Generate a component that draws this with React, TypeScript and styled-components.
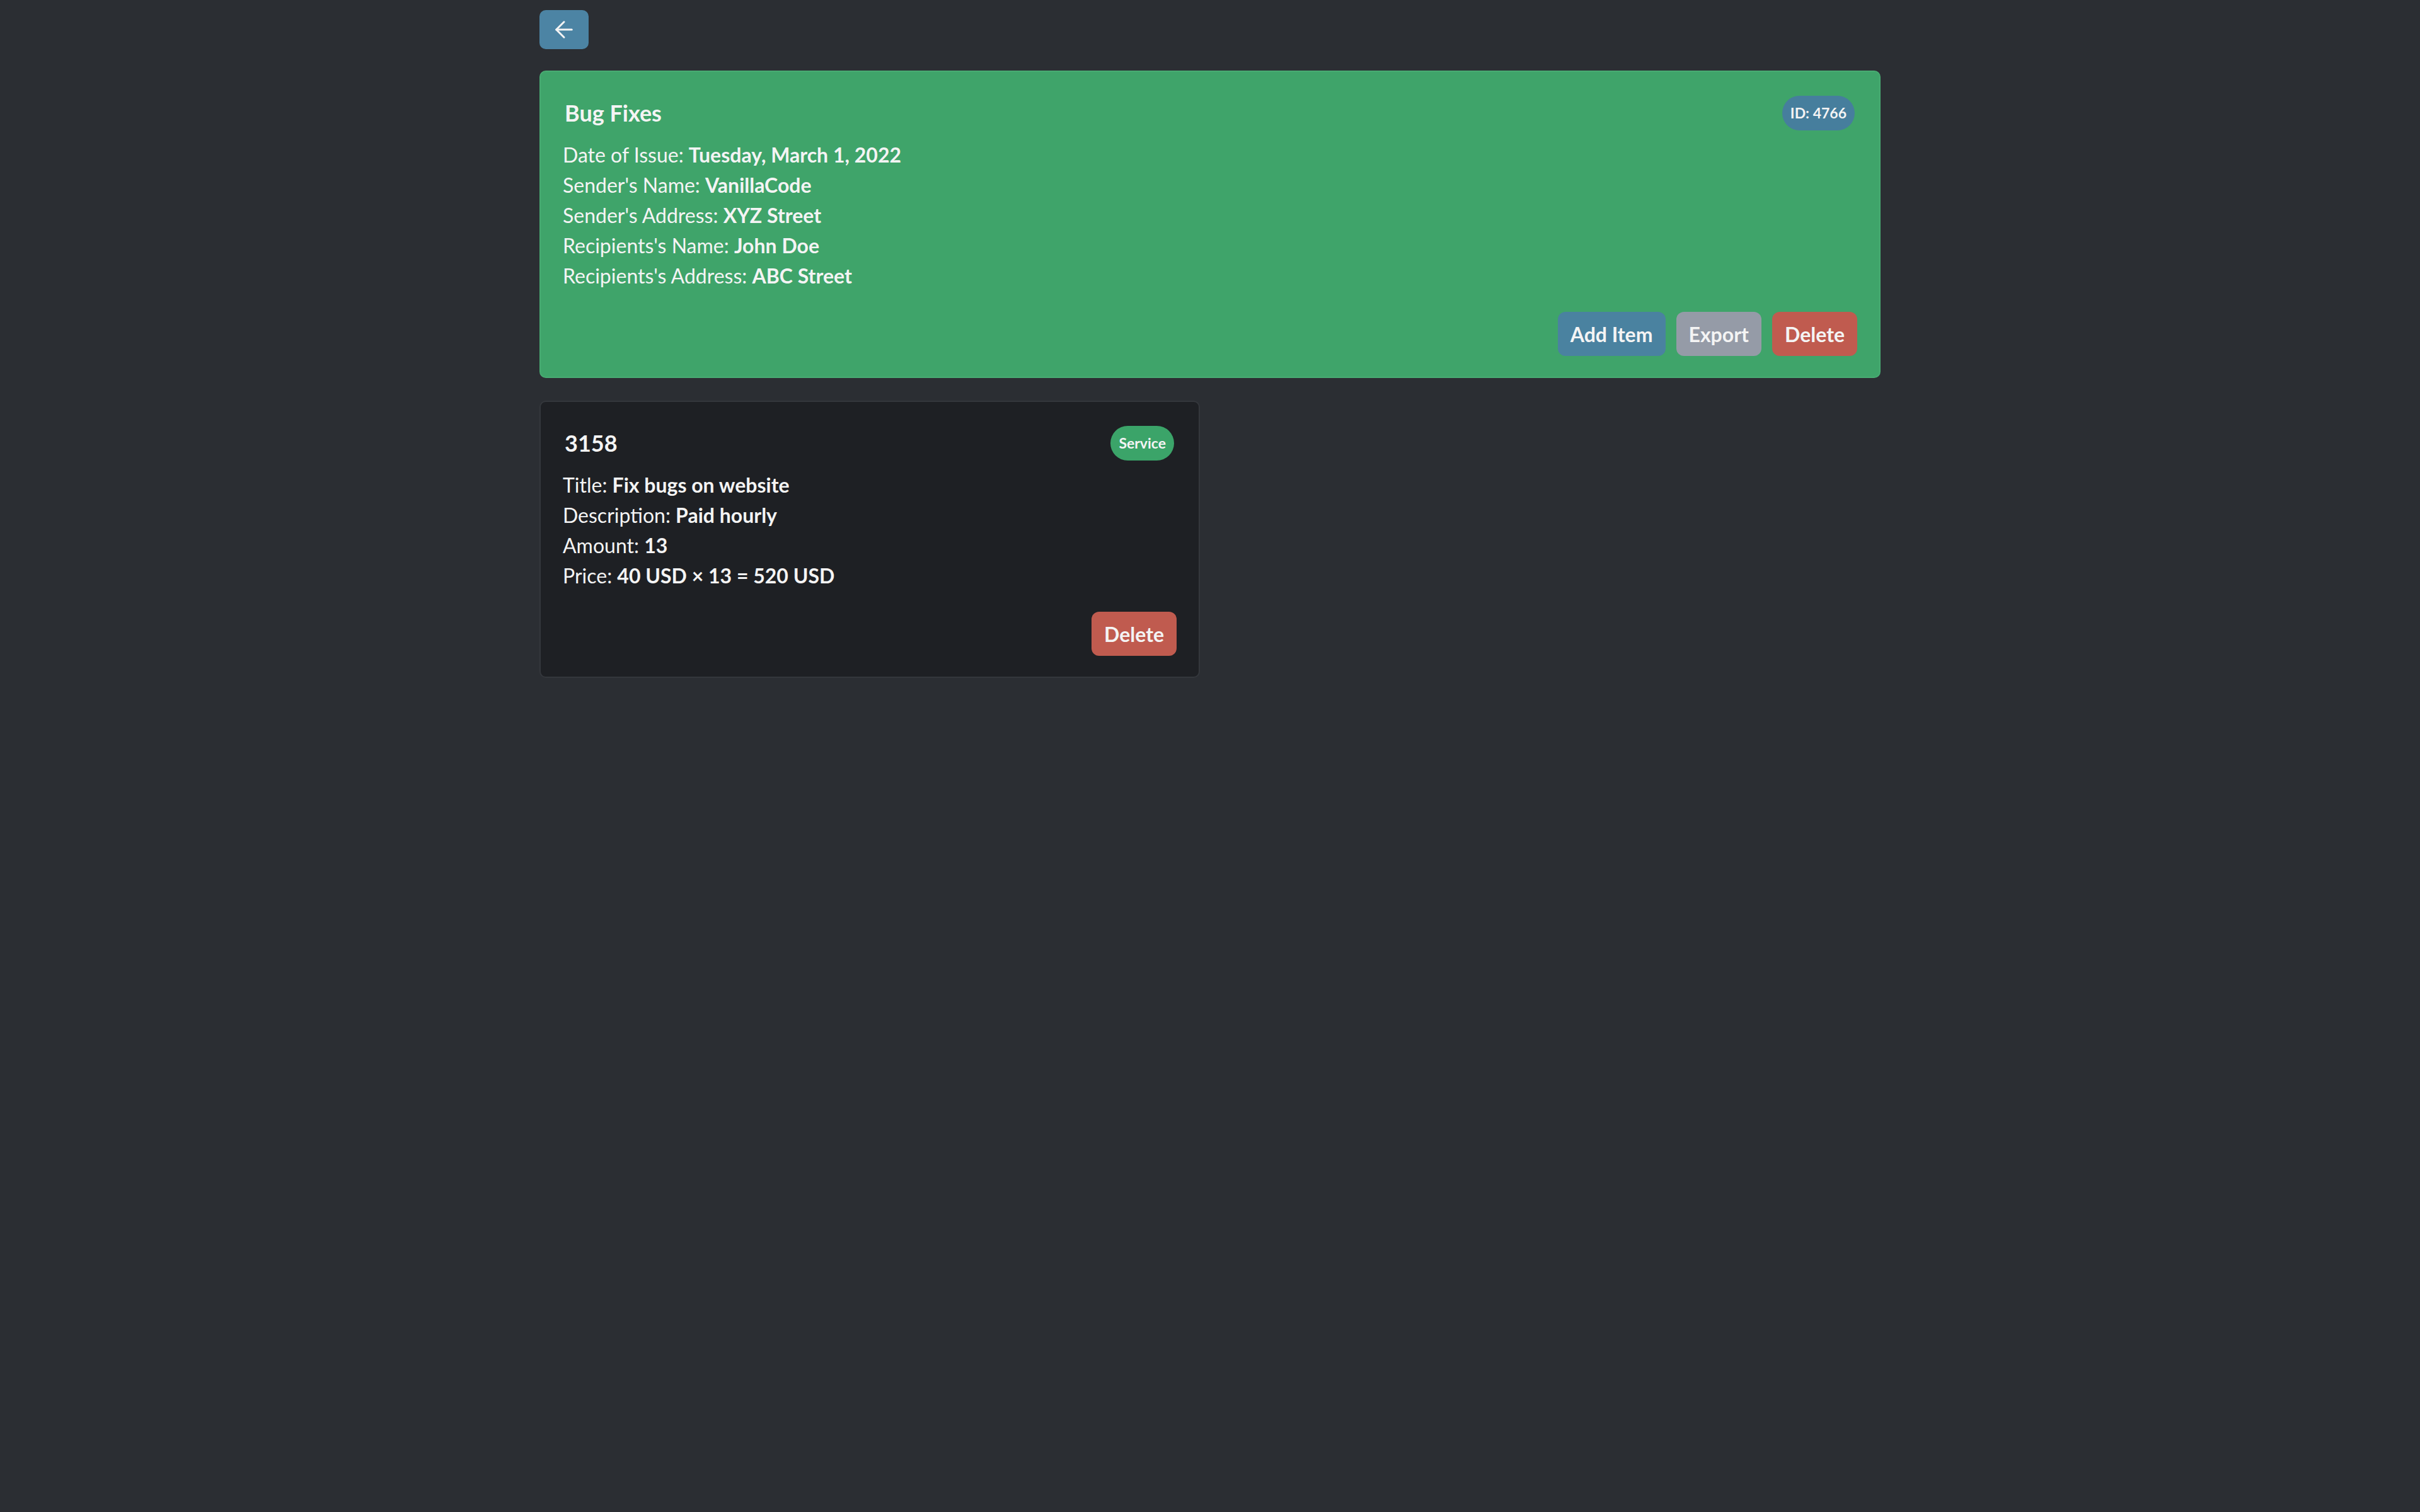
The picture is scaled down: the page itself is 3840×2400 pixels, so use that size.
import React from "react";
import styled, { createGlobalStyle } from "styled-components";
import { ArrowLeft } from "lucide-react";

const GlobalStyle = createGlobalStyle`
  html, body {
    margin: 0;
    padding: 0;
    background: #2b2e33;
  }
  body {
    font-family: "Lato", "Noto Sans", sans-serif;
    color: #f4f4f4;
    -webkit-font-smoothing: antialiased;
  }
  * { box-sizing: border-box; }
`;

const Page = styled.div`
  width: 2128px;
  margin: 0 auto;
  padding-top: 16px;
  min-height: 2400px;
`;

const BackButton = styled.button`
  width: 78px;
  height: 62px;
  border: none;
  border-radius: 10px;
  background: #4c84a4;
  color: #f4f4f4;
  display: flex;
  align-items: center;
  justify-content: center;
  padding: 0;
  cursor: pointer;
`;

const Card = styled.div<{ $tone: "green" | "dark" }>`
  margin-top: ${(p) => (p.$tone === "green" ? "34px" : "0")};
  background: ${(p) => (p.$tone === "green" ? "#3fa46a" : "#1e2024")};
  border: ${(p) => (p.$tone === "green" ? "2px solid #48ab72" : "2px solid #34373c")};
  border-radius: 10px;
  padding: 37px 35px 33px 35px;
  display: flex;
  flex-direction: column;
`;

const Grid = styled.div`
  margin-top: 36px;
  display: grid;
  grid-template-columns: 1fr 1fr;
  gap: 32px;
`;

const Header = styled.div`
  display: flex;
  align-items: center;
  justify-content: space-between;
  padding: 0 4px 0 3px;
  height: 56px;
`;

const Title = styled.div`
  font-size: 36px;
  font-weight: 700;
  line-height: 1;
`;

const Badge = styled.span<{ $tone: "blue" | "green" }>`
  display: inline-flex;
  align-items: center;
  height: 55px;
  padding: 0 13px;
  border-radius: 28px;
  background: ${(p) => (p.$tone === "blue" ? "#467e9d" : "#3ba469")};
  font-size: 23px;
  font-weight: 700;
  color: #f4f4f4;
`;

const Fields = styled.div`
  margin-top: 15px;
  display: flex;
  flex-direction: column;
`;

const Field = styled.div`
  font-size: 32px;
  line-height: 48px;
  white-space: nowrap;
`;

const Value = styled.span`
  font-weight: 700;
`;

const Actions = styled.div`
  margin-top: 33px;
  display: flex;
  justify-content: flex-end;
  gap: 17px;
`;

const ActionButton = styled.button<{ $tone: "blue" | "gray" | "red" }>`
  height: 70px;
  padding: 0 20px;
  border: none;
  border-radius: 12px;
  font-family: inherit;
  font-size: 32px;
  font-weight: 700;
  color: #f4f4f4;
  cursor: pointer;
  background: ${(p) =>
    p.$tone === "blue" ? "#4a82a0" : p.$tone === "gray" ? "#959ba7" : "#c05b4f"};
`;

export default function App() {
  return (
    <>
      <GlobalStyle />
      <Page>
        <BackButton aria-label="Back">
          <ArrowLeft size={42} strokeWidth={1.75} />
        </BackButton>

        <Card $tone="green">
          <Header>
            <Title>Bug Fixes</Title>
            <Badge $tone="blue">ID: 4766</Badge>
          </Header>
          <Fields>
            <Field>
              Date of Issue: <Value>Tuesday, March 1, 2022</Value>
            </Field>
            <Field>
              Sender's Name: <Value>VanillaCode</Value>
            </Field>
            <Field>
              Sender's Address: <Value>XYZ Street</Value>
            </Field>
            <Field>
              Recipients's Name: <Value>John Doe</Value>
            </Field>
            <Field>
              Recipients's Address: <Value>ABC Street</Value>
            </Field>
          </Fields>
          <Actions>
            <ActionButton $tone="blue">Add Item</ActionButton>
            <ActionButton $tone="gray">Export</ActionButton>
            <ActionButton $tone="red">Delete</ActionButton>
          </Actions>
        </Card>

        <Grid>
          <Card $tone="dark">
            <Header>
              <Title>3158</Title>
              <Badge $tone="green">Service</Badge>
            </Header>
            <Fields>
              <Field>
                Title: <Value>Fix bugs on website</Value>
              </Field>
              <Field>
                Description: <Value>Paid hourly</Value>
              </Field>
              <Field>
                Amount: <Value>13</Value>
              </Field>
              <Field>
                Price: <Value>40 USD × 13 = 520 USD</Value>
              </Field>
            </Fields>
            <Actions>
              <ActionButton $tone="red">Delete</ActionButton>
            </Actions>
          </Card>
        </Grid>
      </Page>
    </>
  );
}
